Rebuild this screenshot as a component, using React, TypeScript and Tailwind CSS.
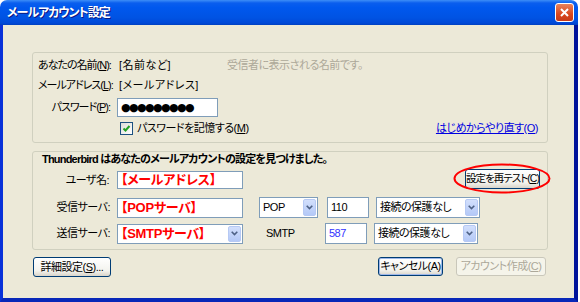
import React from "react";

const F = "font-['Liberation_Sans','Noto_Sans_CJK_JP',sans-serif] [font-feature-settings:'palt']";

function Chevron() {
  return (
    <svg width="7" height="5" viewBox="0 0 7 5">
      <path d="M0.7 0.7 L3.5 3.5 L6.3 0.7" stroke="#4D6185" strokeWidth="1.6" fill="none" />
    </svg>
  );
}

function DropBtn() {
  return (
    <div className="my-[1px] mr-[1px] w-[13px] flex items-center justify-center rounded-[2px] border border-[#B6C9F4] bg-[linear-gradient(to_bottom,#D2DFFC,#B4C9F7)]">
      <Chevron />
    </div>
  );
}

function Select({ w, children, cls = "text-black" }: { w: string; children: React.ReactNode; cls?: string }) {
  return (
    <div className={`${w} h-full flex border border-[#7F9DB9] bg-white`}>
      <div className={`flex-1 flex items-center pl-[3px] overflow-hidden whitespace-nowrap ${cls}`}>{children}</div>
      <DropBtn />
    </div>
  );
}

function Input({ w, children, cls = "text-black" }: { w: string; children: React.ReactNode; cls?: string }) {
  return (
    <div className={`${w} h-full flex items-center border border-[#7F9DB9] bg-white pl-[3px] whitespace-nowrap overflow-hidden ${cls}`}>
      {children}
    </div>
  );
}

function Btn({ w, h, children, disabled = false, cls = "" }: { w: string; h: string; children: React.ReactNode; disabled?: boolean; cls?: string }) {
  return (
    <div
      className={`${w} ${h} flex items-center justify-center rounded-[3px] border whitespace-nowrap ${
        disabled
          ? "border-[#C9C7BA] bg-[#F5F4EA] text-[#ACA899]"
          : "border-[#003C74] bg-[linear-gradient(to_bottom,#FFFFFF,#F3F3EE_70%,#D9D4C9)] text-black"
      } ${cls}`}
    >
      {children}
    </div>
  );
}

const RED = "text-[#FF0000] font-bold text-[13px] tracking-[-0.3px]";

export default function App() {
  return (
    <div className={`w-[580px] h-[302px] bg-white ${F} text-[11px] tracking-[-0.5px]`}>
      <div className="w-[578px] h-[302px] flex flex-col">
        {/* title bar */}
        <div className="h-[25px] rounded-t-[7px] flex items-center bg-[linear-gradient(to_bottom,#3D8EF7_0%,#0A5EEE_12%,#0058EE_30%,#0053E3_70%,#0049D8_92%,#0040C0_100%)]">
          <span className="pl-[7px] text-[12px] font-bold text-white [text-shadow:1px_1px_0_#0A1883] tracking-[-1px]">メールアカウント設定</span>
          <div className="ml-auto mr-[4px] w-[19px] h-[19px] rounded-[3px] border border-white bg-[linear-gradient(to_bottom,#E8835E,#D9471E_60%,#C73A18)] flex items-center justify-center">
            <svg width="11" height="11" viewBox="0 0 11 11">
              <path d="M2 2 L9 9 M9 2 L2 9" stroke="white" strokeWidth="2" />
            </svg>
          </div>
        </div>
        {/* body */}
        <div className="flex-1 flex flex-col bg-[#ECE9D8] border-l-[3px] border-l-[#0831D9] border-r-[4px] border-r-[#00139A] border-b-[4px] border-b-[#0827B8] pt-[27px] pl-[29px] pr-[26px]">
          {/* group 1 */}
          <div className="h-[91px] rounded-[3px] border border-[#D0D0BF] pt-[2px] pl-[5px] pr-[9px] flex flex-col text-black">
            <div className="h-[20px] flex items-center">
              <div className="w-[72px] whitespace-nowrap tracking-[-1px]">あなたの名前(<span className="underline">N</span>):</div>
              <div className="ml-[9px] w-[108px] whitespace-nowrap tracking-[0.5px]">[名前など]</div>
              <div className="text-[#ACA899] whitespace-nowrap">受信者に表示される名前です。</div>
            </div>
            <div className="h-[21px] flex items-center">
              <div className="w-[72px] whitespace-nowrap tracking-[-1px]">メールアドレス(<span className="underline">L</span>):</div>
              <div className="ml-[9px] whitespace-nowrap tracking-[0.5px]">[メールアドレス]</div>
            </div>
            <div className="h-[22px] flex items-center">
              <div className="w-[72px] text-right whitespace-nowrap tracking-[-1px]">パスワード(<span className="underline">P</span>):</div>
              <div className="ml-[7px] w-[101px] h-[19px] border border-[#7F9DB9] bg-white flex items-center pl-[3px] overflow-hidden">
                <span className="font-['DejaVu_Sans',sans-serif] text-[11px] tracking-[-1.6px] leading-none">●●●●●●●●●</span>
              </div>
            </div>
            <div className="h-[20px] flex items-center">
              <div className="ml-[82px] w-[13px] h-[13px] border border-[#1C5180] bg-[linear-gradient(to_bottom_right,#DCDCD7,#FFFFFF)] flex items-center justify-center">
                <svg width="9" height="9" viewBox="0 0 9 9">
                  <path d="M1.5 4.5 L3.5 6.5 L7.5 2" stroke="#21A121" strokeWidth="2" fill="none" />
                </svg>
              </div>
              <div className="ml-[4px] whitespace-nowrap">パスワードを記憶する(<span className="underline">M</span>)</div>
              <div className="ml-auto text-[#0000E0] underline whitespace-nowrap">はじめからやり直す(O)</div>
            </div>
          </div>
          {/* group 2 */}
          <div className="relative mt-[8px] h-[99px] rounded-[3px] border border-[#D0D0BF] flex flex-col text-black">
            <div className="h-[14px] pl-[9px] flex items-center font-bold whitespace-nowrap tracking-[-0.8px]">
              Thunderbird はあなたのメールアカウントの設定を見つけました。
            </div>
            <div className="mt-[4px] h-[20px] flex items-center">
              <div className="w-[76px] text-right whitespace-nowrap">ユーザ名:</div>
              <div className="ml-[8px] h-[18px] flex">
                <Input w="w-[126px]" cls={RED}>【メールアドレス】</Input>
              </div>
              <div className="ml-auto mr-[7px] -mt-[3px]">
                <Btn w="w-[75px]" h="h-[20px]" cls="text-[10.5px] tracking-[-1px]">設定を再テスト(<span className="underline">C</span>)</Btn>
              </div>
            </div>
            <div className="mt-[7px] h-[21px] flex items-center">
              <div className="w-[77px] text-right whitespace-nowrap">受信サーバ:</div>
              <div className="ml-[7px] h-[20px] flex">
                <Input w="w-[126px]" cls={RED}>【POPサーバ】</Input>
              </div>
              <div className="ml-[16px] h-[21px] flex">
                <Select w="w-[59px]">POP</Select>
              </div>
              <div className="ml-[9px] h-[21px] flex">
                <Input w="w-[42px]">110</Input>
              </div>
              <div className="ml-[7px] h-[21px] flex">
                <Select w="w-[104px]">接続の保護なし</Select>
              </div>
            </div>
            <div className="mt-[5px] h-[21px] flex items-center">
              <div className="w-[77px] text-right whitespace-nowrap">送信サーバ:</div>
              <div className="ml-[7px] h-[20px] flex">
                <Select w="w-[126px]" cls={RED}>【SMTPサーバ】</Select>
              </div>
              <div className="w-[82px] pl-[23px] whitespace-nowrap">SMTP</div>
              <div className="h-[21px] flex">
                <Input w="w-[42px]" cls="text-[#3333FF]">587</Input>
              </div>
              <div className="ml-[7px] h-[21px] flex">
                <Select w="w-[104px]">接続の保護なし</Select>
              </div>
            </div>
            <svg className="absolute left-[420px] top-[11px]" width="98" height="31" viewBox="0 0 98 31">
              <ellipse cx="49" cy="15.5" rx="47.5" ry="14" stroke="#FF0000" strokeWidth="2" fill="none" />
            </svg>
          </div>
          {/* buttons */}
          <div className="mt-[7px] flex items-start">
            <div className="ml-[1px]">
              <Btn w="w-[78px]" h="h-[20px]">詳細設定(<span className="underline">S</span>)...</Btn>
            </div>
            <div className="ml-auto">
              <Btn w="w-[65px]" h="h-[19px]" cls="shadow-[inset_0_0_0_1px_#9EB7E9]">キャンセル(A)</Btn>
            </div>
            <div className="ml-[13px] mr-[2px]">
              <Btn w="w-[90px]" h="h-[19px]" disabled>アカウント作成(<span className="underline">C</span>)</Btn>
            </div>
          </div>
        </div>
      </div>
    </div>
  );
}
